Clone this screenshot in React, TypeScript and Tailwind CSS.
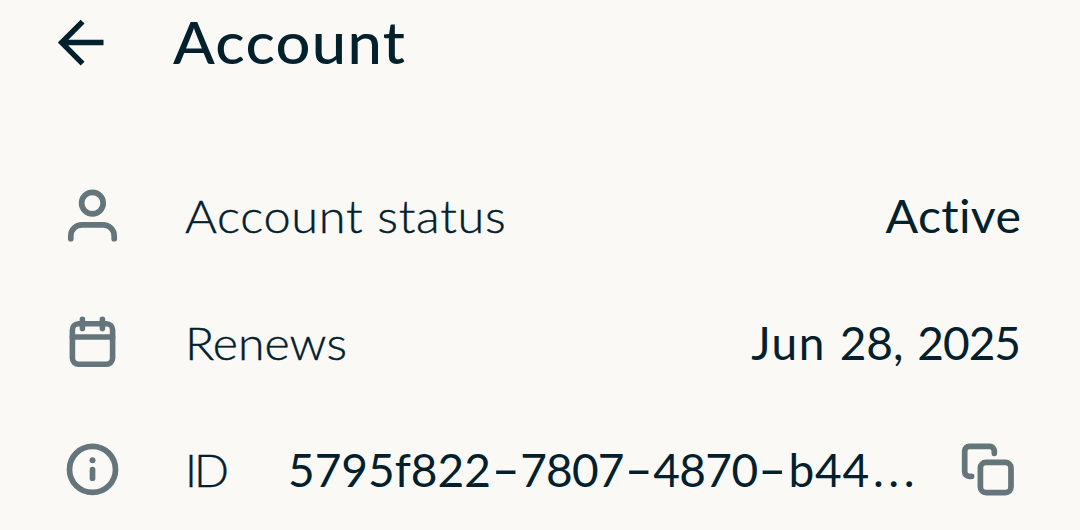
import type { ReactNode } from "react";

interface RowProps {
  icon: ReactNode;
  label: string;
  labelClass: string;
  children: ReactNode;
}

const ID_PARTS = [
  { text: "5795f822", className: "" },
  { text: "7807", className: "tracking-[-0.8px]" },
  { text: "4870", className: "tracking-[-0.6px]" },
  { text: "b44", className: "tracking-[0.8px]" },
];

function BackIcon() {
  return (
    <svg className="size-12" viewBox="0 0 48 48" fill="none" stroke="currentColor" strokeWidth="5.5">
      <path d="M46.5 24.6H5M25.6 3.6 4.7 24.6l20.9 21" />
    </svg>
  );
}

function UserIcon() {
  return (
    <svg className="size-[63px]" viewBox="0 0 63 63" fill="none" stroke="currentColor" strokeWidth="5.7" strokeLinecap="round">
      <circle cx="31.4" cy="18.1" r="10.8" />
      <path d="M9.8 53.7V51a11.2 11.2 0 0 1 11.2-11.2h21A11.2 11.2 0 0 1 53.2 51v2.7" />
    </svg>
  );
}

function CalendarIcon() {
  return (
    <svg className="size-[63px]" viewBox="0 0 63 63" fill="none" stroke="currentColor" strokeWidth="5.6" strokeLinecap="round">
      <rect x="11.4" y="11.7" width="40.2" height="40.6" rx="6.2" />
      <path d="M11.4 25h40.2M21.4 7.4v9M41.4 7.4v9" />
    </svg>
  );
}

function InfoIcon() {
  return (
    <svg className="size-[63px]" viewBox="0 0 63 63" fill="none" stroke="currentColor" strokeWidth="5.7" strokeLinecap="round">
      <circle cx="31.5" cy="30.4" r="23" />
      <circle cx="31.5" cy="21.2" r="3" fill="currentColor" stroke="none" />
      <path d="M31.5 30.7v8.5" />
    </svg>
  );
}

function CopyIcon() {
  return (
    <svg className="size-[63px]" viewBox="0 0 63 63" fill="none" stroke="currentColor" strokeWidth="5.7" strokeLinecap="round">
      <rect x="24.4" y="23.4" width="30.6" height="30.2" rx="5.6" />
      <path d="M15.6 37.3h-2.4a4.5 4.5 0 0 1-4.5-4.5V11.9a4.5 4.5 0 0 1 4.5-4.5h20.6a4.5 4.5 0 0 1 4.5 4.5v2.4" />
    </svg>
  );
}

function Row({ icon, label, labelClass, children }: RowProps) {
  return (
    <div className="flex h-[127px] shrink-0 items-center pl-[61px] pr-[59px]">
      <span className="shrink-0 text-[#64757c]">{icon}</span>
      <span
        className={`ml-[61px] origin-left whitespace-nowrap pb-px font-light [-webkit-text-stroke:0.4px_#03202d] ${labelClass}`}
      >
        {label}
      </span>
      {children}
    </div>
  );
}

export default function App() {
  return (
    <main className="flex h-[530px] w-[1080px] flex-col overflow-hidden bg-[#faf9f5] font-['Lato',sans-serif] text-[46px] leading-none text-[#03202d]">
      <header className="flex h-[153px] shrink-0 items-start pl-[57px] pt-[18px]">
        <button className="shrink-0" aria-label="Back">
          <BackIcon />
        </button>
        <h1 className="ml-[68px] -mt-[5px] origin-left scale-x-[1.06] text-[58px] font-medium tracking-[1.2px]">
          Account
        </h1>
      </header>
      <Row icon={<UserIcon />} label="Account status" labelClass="scale-x-[1.06] tracking-[0.65px]">
        <span className="ml-auto origin-right scale-x-[1.05] pb-px tracking-[0.3px]">Active</span>
      </Row>
      <Row icon={<CalendarIcon />} label="Renews" labelClass="scale-x-[1.05]">
        <span className="mr-px ml-auto whitespace-nowrap pb-px [word-spacing:2px]">
          <span className="tracking-[1.5px]">Jun</span> 28, <span className="tracking-[-1px]">2025</span>
        </span>
      </Row>
      <Row icon={<InfoIcon />} label="ID" labelClass="tracking-[-3px]">
        <span className="ml-[62px] whitespace-nowrap pb-px">
          {ID_PARTS.map((part, i) => (
            <span key={i} className={part.className}>
              {i > 0 && <span className="mx-[6.5px] inline-block -translate-y-[1px] scale-x-[1.7]">-</span>}
              {part.text}
            </span>
          ))}
          <span className="ml-[3px] tracking-[4.5px]">...</span>
        </span>
        <button className="ml-auto mr-[2px] shrink-0 text-[#64757c]" aria-label="Copy ID">
          <CopyIcon />
        </button>
      </Row>
    </main>
  );
}
